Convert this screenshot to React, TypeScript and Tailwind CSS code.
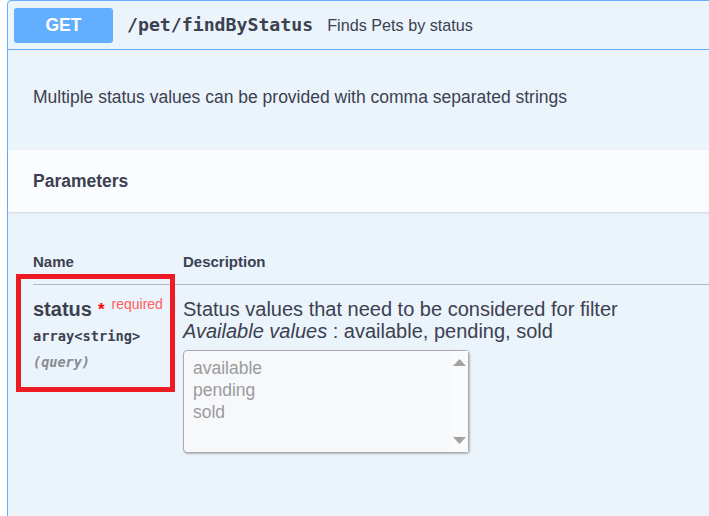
import React from 'react';

const sans = "font-['Liberation_Sans',Arial,sans-serif]";
const mono = "font-['DejaVu_Sans_Mono','Liberation_Mono',monospace]";

const StatusSelect: React.FC = () => {
  const options = ['available', 'pending', 'sold'];
  return (
    <div className="relative mt-[8px] h-[103px] w-[286px] rounded-[4px] border border-[#a8abb1] bg-[#f7f8fa] shadow-[1px_1px_2px_rgba(0,0,0,0.25)]">
      <div className="flex flex-col pl-[9px] pt-[6px]">
        {options.map((o) => (
          <span key={o} className="text-[17.5px] leading-[22px] text-[#9a9b9e]">
            {o}
          </span>
        ))}
      </div>
      <div className="absolute right-0 top-0 flex h-full w-[18px] flex-col items-center justify-between bg-[#f9fafc] py-[8px]">
        <svg width="13" height="7" viewBox="0 0 13 7">
          <path d="M6.5 0 L13 7 L0 7 Z" fill="#a3a3a3" />
        </svg>
        <svg width="13" height="7" viewBox="0 0 13 7">
          <path d="M0 0 L13 0 L6.5 7 Z" fill="#a3a3a3" />
        </svg>
      </div>
    </div>
  );
};

const App: React.FC = () => {
  return (
    <div className={`relative h-[516px] w-[709px] overflow-hidden bg-white ${sans} text-[#3b4151]`}>
      <div className="ml-[7px] h-[560px] w-[760px] rounded-tl-[4px] border border-[#61affe] bg-[#ebf3fb]">
        {/* summary bar */}
        <div className="flex h-[49px] items-center border-b border-[#61affe] pl-[6px]">
          <span className="flex h-[35px] w-[99px] items-center justify-center rounded-[3px] bg-[#61affe] text-[17.5px] font-bold text-white">
            GET
          </span>
          <span className={`ml-[14px] ${mono} text-[18.2px] font-bold`}>/pet/findByStatus</span>
          <span className="ml-[14px] text-[16.2px]">Finds Pets by status</span>
        </div>

        {/* description */}
        <div className="h-[100px] pl-[25px] pt-[35px]">
          <p className="text-[17.5px] leading-[24px]">
            Multiple status values can be provided with comma separated strings
          </p>
        </div>

        {/* parameters header */}
        <div className="flex h-[62px] items-center bg-[#fafcff] pl-[25px] shadow-[0_1px_2px_rgba(0,0,0,0.12)]">
          <h4 className="text-[17.5px] font-bold">Parameters</h4>
        </div>

        {/* table */}
        <div className="pl-[25px] pt-[40px]">
          <div className="flex border-b border-[#b3b7bf] pb-[12px] text-[15px] font-bold leading-[20px]">
            <div className="w-[150px]">Name</div>
            <div>Description</div>
          </div>
          <div className="flex pt-[13px]">
            <div className="w-[150px]">
              <div className="flex items-start leading-[22px]">
                <span className="text-[20px] font-bold">status</span>
                <span className="ml-[6px] mt-[1px] text-[17px] font-bold leading-[22px] text-[#ff0000]">*</span>
                <span className="ml-[7px] -mt-[4px] text-[14px] leading-[20px] text-[#ff6060]">required</span>
              </div>
              <div className={`mt-[5px] ${mono} text-[13.7px] font-bold leading-[20px]`}>array&lt;string&gt;</div>
              <div className={`mt-[6px] ${mono} text-[13.5px] font-bold italic leading-[20px] text-[#888a90]`}>(query)</div>
            </div>
            <div>
              <p className="text-[20px] leading-[22px]">Status values that need to be considered for filter</p>
              <p className="text-[20px] leading-[22px]">
                <i>Available values</i> : available, pending, sold
              </p>
              <StatusSelect />
            </div>
          </div>
        </div>
      </div>

      {/* annotation box */}
      <div className="absolute left-[16px] top-[274px] h-[118px] w-[159px] border-[5px] border-[#ed1c24]" />
    </div>
  );
};

export default App;
